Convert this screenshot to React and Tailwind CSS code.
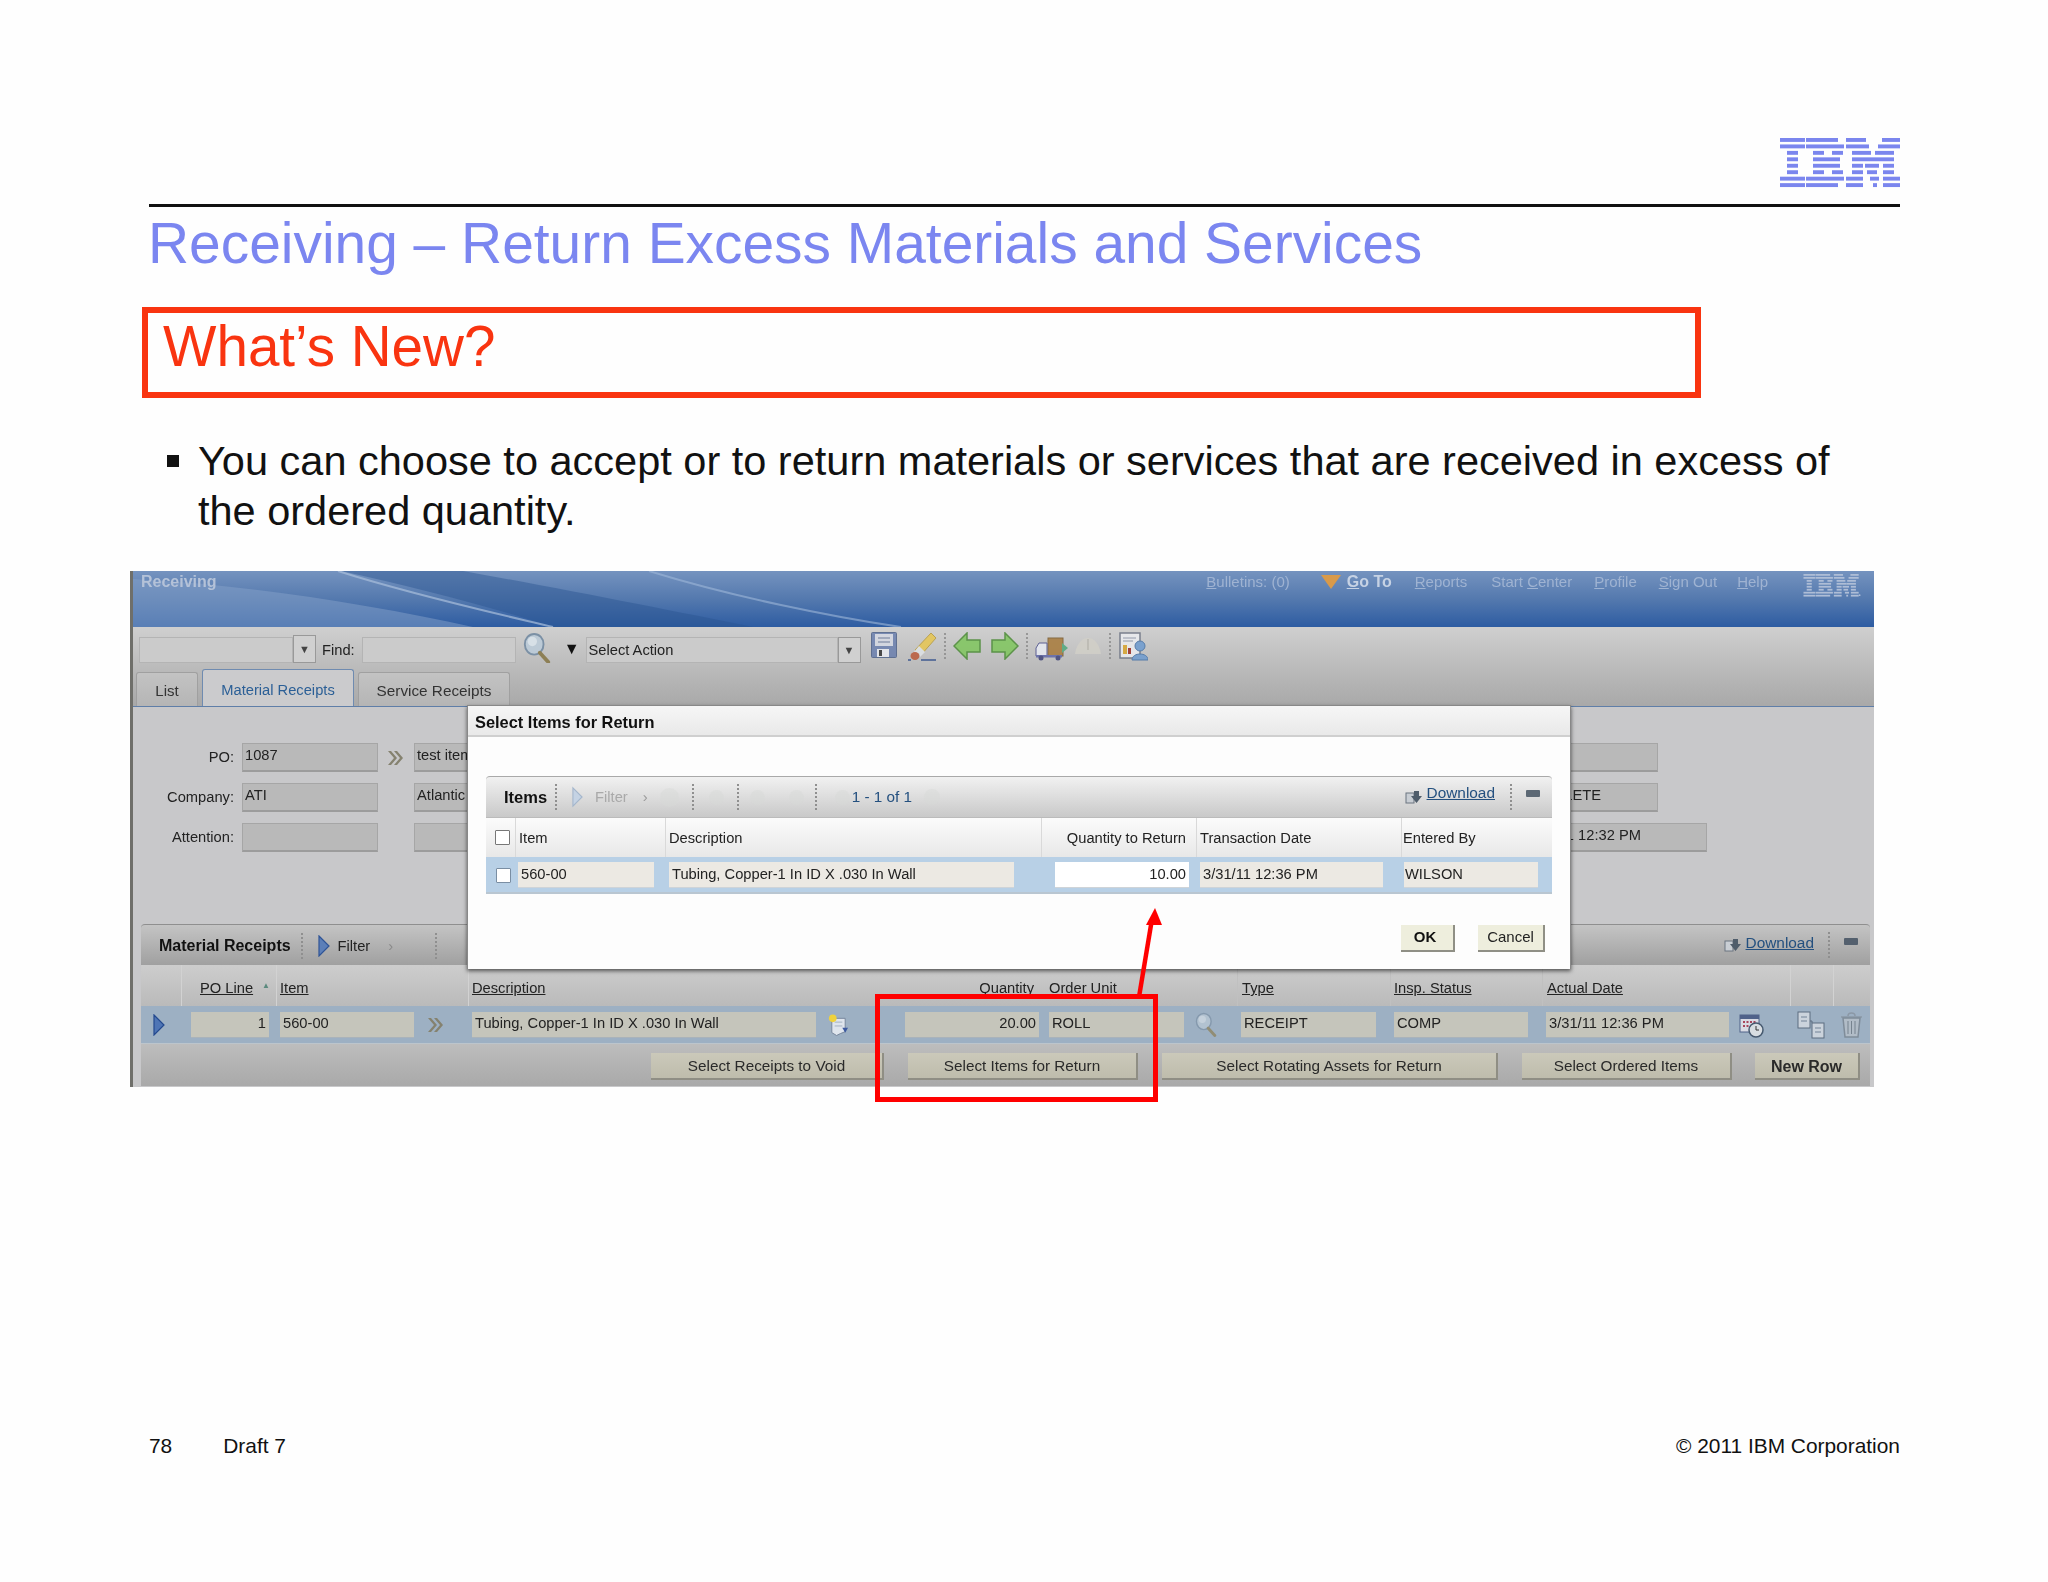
import React from "react";

const ibmRows = [
  [[0,25],[26,32],[66,20],[102,18]],
  [[0,25],[26,38],[66,23],[98,22]],
  [[7,11],[33,11],[52,11],[72,19],[95,19]],
  [[7,11],[33,27],[72,21],[93,21]],
  [[7,11],[33,27],[72,11],[85,14],[103,11]],
  [[7,11],[33,11],[52,11],[72,11],[87,10],[103,11]],
  [[0,25],[26,38],[66,17],[90,9],[103,17]],
  [[0,25],[26,32],[66,17],[93,4],[103,17]],
];
function IbmLogo({ color, className, dot }) {
  return (
    <svg viewBox="0 0 124 50" className={className}>
      {ibmRows.map((r, i) =>
        r.map(([x, w], j) => <rect key={i + "-" + j} x={x} y={i * 6.45} width={w} height={3.9} fill={color} />)
      )}
      {dot && <circle cx="122" cy="46" r="2" fill={color} />}
    </svg>
  );
}

const Magnifier = ({ className }) => (
  <svg viewBox="0 0 30 32" className={className}>
    <ellipse cx="12" cy="12" rx="10" ry="11" fill="#bccad6" stroke="#7b90a5" strokeWidth="2" />
    <ellipse cx="10" cy="9" rx="5" ry="5" fill="#d7e0e7" />
    <path d="M18 21 L27 31" stroke="#8d7f55" strokeWidth="4" strokeLinecap="round" />
  </svg>
);
const Floppy = () => (
  <svg viewBox="0 0 26 26" className="w-[26px] h-[26px]">
    <rect x="0.5" y="0.5" width="25" height="25" rx="1" fill="#6a7fae" stroke="#4e6188" />
    <rect x="4" y="2" width="18" height="12" fill="#d5d9e4" />
    <path d="M7 6 H19 M7 10 H19" stroke="#8792ac" strokeWidth="1.5" />
    <rect x="6" y="17" width="12" height="8" fill="#e9ebf0" />
    <rect x="8" y="18" width="3" height="6" fill="#333" />
  </svg>
);
const Eraser = () => (
  <svg viewBox="0 0 30 29" className="w-[30px] h-[29px]">
    <path d="M24 1 L29 6 L14 23 L8 18 Z" fill="#e7c651" stroke="#b59a3e" />
    <path d="M12 14 L18 20 L13 25 L7 20 Z" fill="#dfe3e6" />
    <ellipse cx="8" cy="24" rx="4.5" ry="4" fill="#bb5a3a" />
    <path d="M1 28 H4 M14 28 H29" stroke="#4f6696" strokeWidth="2" />
  </svg>
);
const ArrowL = () => (
  <svg viewBox="0 0 28 28" className="w-[28px] h-[28px]">
    <path d="M1 14 L14 1 V8 H27 V20 H14 V27 Z" fill="#7fc65d" stroke="#4a8a35" strokeWidth="1.5" />
  </svg>
);
const ArrowR = () => (
  <svg viewBox="0 0 28 28" className="w-[28px] h-[28px]">
    <path d="M27 14 L14 1 V8 H1 V20 H14 V27 Z" fill="#7fc65d" stroke="#4a8a35" strokeWidth="1.5" />
  </svg>
);
const Truck = () => (
  <svg viewBox="0 0 34 24" className="w-[34px] h-[24px]">
    <rect x="13" y="1" width="15" height="18" fill="#a87a3a" stroke="#7a5a2c" />
    <path d="M1 11 L4 6 H12 V19 H1 Z" fill="#e8ebf3" stroke="#4a4f8a" />
    <rect x="1" y="18" width="26" height="2.5" fill="#5f66a8" />
    <circle cx="6" cy="21" r="2.5" fill="#3d4278" />
    <circle cx="23" cy="21" r="2.5" fill="#3d4278" />
    <path d="M27 6 L33 11 L27 16 Z" fill="#4fa77c" />
  </svg>
);
const Dome = () => (
  <svg viewBox="0 0 28 18" className="w-[28px] h-[18px]">
    <path d="M1 17 C3 5 9 1 14 1 C19 1 25 5 27 17 Z" fill="#d2d0c8" />
    <path d="M14 2 V13" stroke="#a9a79e" />
  </svg>
);
const ReportIcon = () => (
  <svg viewBox="0 0 29 29" className="w-[29px] h-[29px]">
    <rect x="1" y="1" width="20" height="25" fill="#ecedf0" stroke="#6c7383" strokeWidth="1.5" />
    <path d="M4 6 H17 M4 9 H14" stroke="#8a92a5" />
    <rect x="4" y="13" width="4" height="9" fill="#d9a52e" />
    <rect x="9" y="16" width="3" height="6" fill="#9c2b22" />
    <circle cx="21" cy="14" r="5" fill="#6d9bd0" stroke="#4470a5" />
    <path d="M13 28 C13 20 29 20 29 28 Z" fill="#6d9bd0" stroke="#4470a5" />
  </svg>
);
const Dbl = ({ className }) => (
  <svg viewBox="0 0 17 16" className={className}>
    <path d="M1 1 L7 8 L1 15 H4 L10 8 L4 1 Z M7 1 L13 8 L7 15 H10 L16 8 L10 1 Z" fill="#85826f" />
  </svg>
);
const BlueTri = ({ className, fill = "#5c7fb8", stroke = "#2f5496" }) => (
  <svg viewBox="0 0 12 22" className={className}>
    <path d="M1 1 L11 11 L1 21 Z" fill={fill} stroke={stroke} strokeWidth="1.2" />
  </svg>
);
const NoteIcon = () => (
  <svg viewBox="0 0 22 26" className="w-[21px] h-[26px]">
    <path d="M4 6 H18 V20 L13 22 L9 24 L4 21 Z" fill="#dfe5ed" stroke="#74849a" />
    <path d="M7 10 H15 M7 14 H15" stroke="#a2afbf" />
    <circle cx="5" cy="6" r="4" fill="#efd23c" />
    <path d="M15 16 H21 L18 21 Z" fill="#3d5aa0" />
  </svg>
);
const Calendar = () => (
  <svg viewBox="0 0 25 26" className="w-[25px] h-[26px]">
    <rect x="1" y="3" width="19" height="17" fill="#d9dbe4" stroke="#50628a" />
    <rect x="1" y="3" width="19" height="4" fill="#50628a" />
    <path d="M4 10 H17 M4 14 H17" stroke="#a8465c" strokeWidth="2" strokeDasharray="2 1.5" />
    <circle cx="17" cy="18" r="7" fill="#d8dde2" stroke="#46596f" strokeWidth="1.5" />
    <path d="M17 14 V18 H20" stroke="#333" fill="none" />
  </svg>
);
const DupIcon = () => (
  <svg viewBox="0 0 28 28" className="w-[28px] h-[28px]">
    <rect x="1" y="1" width="12" height="16" fill="#cbd3dc" stroke="#5c6c80" />
    <rect x="15" y="12" width="12" height="15" fill="#cbd3dc" stroke="#5c6c80" />
    <path d="M4 6 H10 M4 10 H10 M18 17 H24 M18 21 H24" stroke="#738397" />
    <path d="M13 10 H15 V12" stroke="#5c6c80" fill="none" />
  </svg>
);
const Trash = () => (
  <svg viewBox="0 0 25 28" className="w-[25px] h-[28px]">
    <path d="M2 6 H23 M9 5 C9 1 16 1 16 5" stroke="#8b98a6" strokeWidth="1.5" fill="none" />
    <path d="M4 7 L6 26 H19 L21 7 Z" fill="#b1bcc7" stroke="#7f8c99" strokeWidth="1.5" />
    <path d="M9 10 V23 M12.5 10 V23 M16 10 V23" stroke="#76838f" />
  </svg>
);
const DownloadIcon = () => (
  <svg viewBox="0 0 17 14" className="w-[17px] h-[14px]">
    <rect x="1" y="3" width="8" height="10" fill="#c9ced4" stroke="#6b7580" />
    <path d="M9 1 H14 V6 H17 L11.5 13 L6 6 H9 Z" fill="#4f5d6b" />
  </svg>
);
const Ghost = ({ className }) => (
  <span className={"inline-block rounded-full bg-[#d6dad6] opacity-45 " + (className || "")} />
);

const Dots = ({ className }) => (
  <span className={"inline-block w-0 h-[26px] border-l-2 border-dotted border-[#8f8f8f] " + (className || "")} />
);

const Field = ({ className, children }) => (
  <div className={"h-[29px] bg-[#b9b9b9] border border-[#a6a6a6] border-b-2 border-b-[#9c9c9c] pl-[2px] leading-[22px] text-[14.7px] text-[#222] whitespace-nowrap overflow-hidden " + className}>
    {children}
  </div>
);
const RowField = ({ className, children }) => (
  <div className={"h-[26px] bg-[#c5c5bb] border-b border-[#aab3ba] px-[3px] leading-[22px] text-[14.7px] text-[#222] whitespace-nowrap overflow-hidden " + className}>
    {children}
  </div>
);
const DlgField = ({ className, children }) => (
  <div className={"h-[26px] bg-[#ece9e3] border-b border-[#cfd4d8] leading-[24px] text-[14.7px] text-[#222] whitespace-nowrap overflow-hidden " + className}>
    {children}
  </div>
);
const Btn = ({ className, children }) => (
  <div className={"h-[27px] pt-[2px] flex items-center justify-center bg-gradient-to-b from-[#cbc9ba] to-[#bebcac] border-b-2 border-r-2 border-[#8f8e84] text-[15.3px] text-[#2a2a2a] " + className}>
    {children}
  </div>
);
const Lbl = ({ children }) => (
  <div className="w-[101px] text-right text-[14.7px] text-[#222] leading-[29px]">{children}</div>
);
const NavLink = ({ className, children }) => (
  <span className={"text-[15px] text-[#9fb3d2] leading-[20px] whitespace-nowrap " + (className || "")}>{children}</span>
);

export default function App() {
  return (
    <div className="relative w-[2048px] h-[1582px] overflow-hidden bg-[#fefefe] font-['Liberation_Sans',Arial,sans-serif]">
      <div className="flex justify-end pt-[138px] pr-[144px]">
        <IbmLogo color="#7b86ee" className="w-[124px] h-[50px]" />
      </div>
      <div className="ml-[149px] mr-[148px] mt-[16px] h-[3px] bg-[#111]" />
      <h1 className="ml-[148px] mt-[3px] text-[56.9px] leading-[66px] text-[#7b86f0] whitespace-nowrap">
        Receiving – Return Excess Materials and Services
      </h1>
      <div className="ml-[142px] mt-[31px] w-[1559px] h-[91px] border-[6px] border-[#f93410] pl-[15px]">
        <div className="text-[56.6px] leading-[66px] mt-[1px] text-[#f93410]">What’s New?</div>
      </div>
      <div className="relative ml-[198px] mt-[38px] w-[1680px] text-[41.5px] leading-[50px] text-[#111]">
        <span className="absolute left-[-31px] top-[19px] w-[12px] h-[12px] bg-[#111]" />
        You can choose to accept or to return materials or services that are received in excess of
        <br />
        the ordered quantity.
      </div>

      {/* screenshot */}
      <div className="absolute left-[130px] top-[571px] w-[1744px] h-[516px] blur-[0.45px] border-l-[3px] border-[#6f6f6a] bg-[#c8c8ca]">
        <div className="relative h-[56px] overflow-hidden bg-gradient-to-b from-[#7593bf] via-[#5479ae] to-[#2d5ca2] flex justify-between">
          <svg viewBox="0 0 1741 56" className="absolute inset-0 w-full h-full" preserveAspectRatio="none">
            <path d="M0 8 C120 14 240 34 340 56 L0 56 Z" fill="#86a2ca" opacity="0.5" />
            <path d="M208 0 L330 0 C430 18 540 40 620 56 L420 56 C360 36 280 16 208 0 Z" fill="#2a5490" opacity="0.45" />
            <path d="M205 0 C280 24 370 44 420 56" stroke="#a9bfdc" strokeWidth="2" fill="none" opacity="0.7" />
            <path d="M516 0 C600 26 700 46 768 56" stroke="#9fb7d8" strokeWidth="2" fill="none" opacity="0.6" />
          </svg>
          <span className="relative pl-[8px] pt-[1px] text-[16px] font-bold leading-[20px] text-[#b4c2d8]">Receiving</span>
          <div className="relative flex items-start pt-[1px] pr-[11px]">
            <NavLink><u>B</u>ulletins: (0)</NavLink>
            <svg viewBox="0 0 20 14" className="ml-[31px] mt-[3px] w-[20px] h-[14px]">
              <path d="M0 0 H20 L10 14 Z" fill="#d99a4a" />
            </svg>
            <span className="ml-[6px] text-[16px] font-bold leading-[20px] text-[#c6d2e4]"><u>G</u>o To</span>
            <NavLink className="ml-[23px]"><u>R</u>eports</NavLink>
            <NavLink className="ml-[24px]">Start <u>C</u>enter</NavLink>
            <NavLink className="ml-[22px]"><u>P</u>rofile</NavLink>
            <NavLink className="ml-[22px]"><u>S</u>ign Out</NavLink>
            <NavLink className="ml-[20px]"><u>H</u>elp</NavLink>
            <IbmLogo color="#aebdd6" dot className="ml-[33px] mt-[2px] w-[62px] h-[23px]" />
          </div>
        </div>

        <div className="h-[80px] bg-gradient-to-b from-[#cfcfcf] to-[#a8a8a8] flex flex-col justify-between">
          <div className="flex items-start pl-[6px] pt-[5px]">
            <div className="mt-[5px] w-[154px] h-[26px] bg-[#cbcbcb] border border-[#b4b4b4]" />
            <div className="mt-[3px] w-[23px] h-[28px] bg-[#d0d0d0] border border-[#999] flex items-center justify-center text-[11px] text-[#444]">▼</div>
            <span className="ml-[6px] mt-[8px] text-[14.7px] leading-[20px] text-[#222]">Find:</span>
            <div className="ml-[7px] mt-[5px] w-[154px] h-[26px] bg-[#cbcbcb] border border-[#b4b4b4]" />
            <Magnifier className="ml-[6px] mt-[1px] w-[30px] h-[30px]" />
            <span className="ml-[12px] mt-[8px] text-[16px] leading-[18px] text-[#111]">▼</span>
            <div className="ml-[6px] mt-[5px] w-[252px] h-[26px] bg-[#cbcbcb] border border-[#b4b4b4] pl-[2px] text-[14.7px] leading-[24px] text-[#222]">Select Action</div>
            <div className="mt-[5px] w-[23px] h-[26px] bg-[#d0d0d0] border border-[#999] flex items-center justify-center text-[11px] text-[#444]">▼</div>
            <div className="ml-[10px] flex items-start opacity-85">
              <Floppy />
              <div className="ml-[10px]"><Eraser /></div>
              <Dots className="ml-[7px] mt-[1px]" />
              <div className="ml-[7px]"><ArrowL /></div>
              <div className="ml-[10px]"><ArrowR /></div>
              <Dots className="ml-[7px] mt-[1px]" />
              <div className="ml-[7px] mt-[5px]"><Truck /></div>
              <div className="ml-[5px] mt-[5px]"><Dome /></div>
              <Dots className="ml-[7px] mt-[1px]" />
              <div className="ml-[8px]"><ReportIcon /></div>
            </div>
          </div>
          <div className="flex items-end pl-[3px] border-b border-[#5f7ea8]">
            <div className="w-[62px] h-[34px] pt-[3px] rounded-t-[3px] bg-gradient-to-b from-[#c3c3c3] to-[#b5b5b5] border border-b-0 border-[#a0a0a0] flex items-center justify-center text-[15px] text-[#333]">List</div>
            <div className="ml-[4px] w-[152px] h-[37px] pt-[5px] rounded-t-[3px] bg-[#cbcbcd] border border-b-0 border-[#6f8bb0] flex items-center justify-center text-[14.7px] text-[#2b5f96]">Material Receipts</div>
            <div className="ml-[4px] w-[152px] h-[34px] pt-[3px] rounded-t-[3px] bg-gradient-to-b from-[#c3c3c3] to-[#b5b5b5] border border-b-0 border-[#a0a0a0] flex items-center justify-center text-[15.3px] text-[#333]">Service Receipts</div>
          </div>
        </div>

        <div className="h-[217px] pt-[36px] flex flex-col gap-[11px]">
          <div className="flex justify-between pr-[216px]">
            <div className="flex items-center">
              <Lbl>PO:</Lbl>
              <Field className="ml-[8px] w-[136px]">1087</Field>
              <Dbl className="ml-[9px] w-[17px] h-[16px]" />
              <Field className="ml-[10px] w-[150px]">test item</Field>
            </div>
            <Field className="w-[200px]" />
          </div>
          <div className="flex justify-between pr-[216px]">
            <div className="flex items-center">
              <Lbl>Company:</Lbl>
              <Field className="ml-[8px] w-[136px]">ATI</Field>
              <Field className="ml-[36px] w-[150px]">Atlantic</Field>
            </div>
            <Field className="w-[200px] text-right pr-[56px]">COMPLETE</Field>
          </div>
          <div className="flex justify-between pr-[167px]">
            <div className="flex items-center">
              <Lbl>Attention:</Lbl>
              <Field className="ml-[8px] w-[136px]" />
              <Field className="ml-[36px] w-[150px]" />
            </div>
            <Field className="w-[300px] text-right pr-[65px]">3/31/11 12:32 PM</Field>
          </div>
        </div>

        <div className="ml-[8px] mr-[4px] w-[1729px]">
          <div className="h-[41px] rounded-t-[4px] border-t border-[#8f8f8f] bg-gradient-to-b from-[#c4c4c4] to-[#a0a0a0] flex items-center justify-between">
            <div className="flex items-center pt-[2px]">
              <span className="ml-[18px] text-[16px] font-bold text-[#111]">Material Receipts</span>
              <Dots className="ml-[10px]" />
              <BlueTri className="ml-[15px] w-[12px] h-[22px]" />
              <span className="ml-[8px] text-[14.7px] text-[#222]">Filter</span>
              <span className="ml-[18px] text-[15px] text-[#8a8a8a]">›</span>
              <Dots className="ml-[42px]" />
            </div>
            <div className="flex items-center pr-[12px]">
              <DownloadIcon />
              <span className="ml-[5px] -mt-[5px] text-[15.4px] text-[#24507f] underline">Download</span>
              <Dots className="ml-[14px]" />
              <span className="ml-[14px] -mt-[7px] w-[14px] h-[7px] bg-[#54606e] rounded-[1px]" />
            </div>
          </div>
          <div className="h-[41px] flex bg-gradient-to-b from-[#cdcdcd] to-[#bababa] text-[14.7px] text-[#222]">
            <div className="w-[40px]" />
            <div className="w-[95px] pl-[18px] pt-[12px] border-l border-[#d2d2d2] flex"><u>PO Line</u><span className="ml-[9px] text-[8px] mt-[3px] text-[#5b8a7e]">▲</span></div>
            <div className="w-[192px] pl-[3px] pt-[12px] border-l border-[#d2d2d2]"><u>Item</u></div>
            <div className="w-[424px] pl-[3px] pt-[12px] border-l border-[#d2d2d2]"><u>Description</u></div>
            <div className="w-[152px] pr-[10px] pt-[12px] text-right">Quantity</div>
            <div className="w-[193px] pl-[5px] pt-[12px]">Order Unit</div>
            <div className="w-[153px] pl-[4px] pt-[12px] border-l border-[#c0c0c0]"><u>Type</u></div>
            <div className="w-[152px] pl-[3px] pt-[12px] border-l border-[#c0c0c0]"><u>Insp. Status</u></div>
            <div className="w-[248px] pl-[4px] pt-[12px] border-l border-[#c0c0c0]"><u>Actual Date</u></div>
            <div className="w-[43px] border-l border-[#d2d2d2]" />
            <div className="w-[37px] border-l border-[#d2d2d2]" />
          </div>
          <div className="h-[38px] flex items-center bg-[#9db0c3] border-b border-[#bcc5cc]">
            <BlueTri className="ml-[12px] w-[12px] h-[22px]" fill="#4f75b5" stroke="#24498f" />
            <RowField className="ml-[26px] w-[78px] text-right">1</RowField>
            <RowField className="ml-[11px] w-[134px]">560-00</RowField>
            <Dbl className="ml-[13px] w-[17px] h-[16px]" />
            <RowField className="ml-[28px] w-[344px]">Tubing, Copper-1 In ID X .030 In Wall</RowField>
            <div className="ml-[12px]"><NoteIcon /></div>
            <RowField className="ml-[56px] w-[134px] text-right">20.00</RowField>
            <RowField className="ml-[10px] w-[135px]">ROLL</RowField>
            <Magnifier className="ml-[11px] w-[22px] h-[25px] opacity-70" />
            <RowField className="ml-[24px] w-[135px]">RECEIPT</RowField>
            <RowField className="ml-[18px] w-[134px]">COMP</RowField>
            <RowField className="ml-[18px] w-[183px]">3/31/11 12:36 PM</RowField>
            <div className="ml-[10px]"><Calendar /></div>
            <div className="ml-[33px]"><DupIcon /></div>
            <div className="ml-[14px]"><Trash /></div>
          </div>
          <div className="h-[42px] pt-[9px] flex bg-gradient-to-b from-[#bdbdbd] to-[#a9a9a9]">
            <Btn className="ml-[510px] w-[233px]">Select Receipts to Void</Btn>
            <Btn className="ml-[24px] w-[230px]">Select Items for Return</Btn>
            <Btn className="ml-[24px] w-[336px]">Select Rotating Assets for Return</Btn>
            <Btn className="ml-[24px] w-[210px]">Select Ordered Items</Btn>
            <Btn className="ml-[23px] w-[105px] font-bold text-[16px]">New Row</Btn>
          </div>
        </div>

        {/* dialog */}
        <div className="absolute left-[334px] top-[134px] w-[1104px] h-[264px] bg-[#fdfdfd] border-t border-l border-r border-[#888] shadow-[0_2px_4px_rgba(0,0,0,0.6)]">
          <div className="h-[31px] bg-gradient-to-b from-[#f6f6f6] to-[#e9e9e9] border-b-2 border-[#cfcfcf] pl-[7px] leading-[33px] text-[16.4px] font-bold text-[#111]">
            Select Items for Return
          </div>
          <div className="mx-[18px] mt-[39px] w-[1066px] border-b-2 border-[#b9c6d1]">
            <div className="h-[41px] rounded-t-[4px] border-t border-[#a9a9a9] bg-gradient-to-b from-[#f1f1f1] to-[#c9c9c9] flex items-center justify-between">
              <div className="flex items-center">
                <span className="ml-[18px] text-[16.5px] font-bold text-[#111]">Items</span>
                <Dots className="ml-[8px]" />
                <BlueTri className="ml-[15px] w-[11px] h-[22px]" fill="#c5d3e4" stroke="#a4b6cc" />
                <span className="ml-[12px] text-[14.7px] text-[#a9a9a9]">Filter</span>
                <span className="ml-[15px] text-[15px] text-[#9c9c9c]">›</span>
                <Ghost className="ml-[12px] w-[19px] h-[19px]" />
                <Dots className="ml-[13px]" />
                <Ghost className="ml-[15px] w-[15px] h-[15px]" />
                <Dots className="ml-[13px]" />
                <Ghost className="ml-[11px] w-[15px] h-[15px]" />
                <Ghost className="ml-[24px] w-[15px] h-[15px]" />
                <Dots className="ml-[11px]" />
                <Ghost className="ml-[18px] w-[15px] h-[15px]" />
                <span className="ml-[2px] text-[15.3px] text-[#24507f] whitespace-nowrap">1 - 1 of 1</span>
                <Ghost className="ml-[12px] w-[16px] h-[16px]" />
              </div>
              <div className="flex items-center pr-[12px]">
                <DownloadIcon />
                <span className="ml-[5px] -mt-[9px] text-[15.4px] text-[#24507f] underline">Download</span>
                <Dots className="ml-[15px]" />
                <span className="ml-[14px] -mt-[8px] w-[14px] h-[7px] bg-[#5d6975] rounded-[1px]" />
              </div>
            </div>
            <div className="h-[40px] flex bg-gradient-to-b from-[#fbfbfb] to-[#e8e8e8] text-[14.7px] text-[#222] leading-[40px] border-t border-[#bbb]">
              <div className="w-[29px] flex items-center justify-center pl-[4px]"><span className="w-[15px] h-[15px] bg-white border border-[#777] rounded-[1px]" /></div>
              <div className="w-[150px] pl-[3px] border-l border-[#d9d9d9]">Item</div>
              <div className="w-[376px] pl-[3px] border-l border-[#d9d9d9]">Description</div>
              <div className="w-[155px] pr-[10px] text-right border-l border-[#d9d9d9]">Quantity to Return</div>
              <div className="w-[205px] pl-[3px] border-l border-[#d9d9d9]">Transaction Date</div>
              <div className="w-[151px] pl-[1px] border-l border-[#d9d9d9]">Entered By</div>
            </div>
            <div className="h-[35px] pt-[1px] flex items-center bg-[#b8d0e6]">
              <span className="ml-[10px] w-[15px] h-[15px] bg-white border border-[#7a8ea3] rounded-[1px]" />
              <DlgField className="ml-[7px] w-[136px] px-[3px]">560-00</DlgField>
              <DlgField className="ml-[15px] w-[345px] px-[3px]">Tubing, Copper-1 In ID X .030 In Wall</DlgField>
              <DlgField className="ml-[41px] w-[134px] px-[3px] text-right bg-white">10.00</DlgField>
              <DlgField className="ml-[11px] w-[183px] px-[3px]">3/31/11 12:36 PM</DlgField>
              <DlgField className="ml-[21px] w-[134px] px-[1px]">WILSON</DlgField>
            </div>
          </div>
          <div className="mt-[31px] pr-[25px] flex justify-end">
            <div className="w-[54px] h-[27px] pr-[4px] bg-[#eeeedd] border-r-2 border-b-2 border-[#8f8f85] flex items-center justify-center text-[15px] font-bold text-[#111]">OK</div>
            <div className="ml-[23px] w-[67px] h-[27px] bg-[#eeeedd] border-r-2 border-b-2 border-[#8f8f85] flex items-center justify-center text-[15px] text-[#222]">Cancel</div>
          </div>
        </div>
      </div>

      {/* annotations */}
      <div className="absolute left-[875px] top-[994px] w-[283px] h-[108px] border-[5px] border-[#ff0000]" />
      <svg viewBox="0 0 40 100" className="absolute left-[1130px] top-[905px] w-[40px] h-[100px]">
        <path d="M9 92 L22 14" stroke="#ff0000" strokeWidth="4.5" fill="none" />
        <path d="M25 3 L32 20 L16 20 Z" fill="#ff0000" />
      </svg>

      <div className="absolute left-[149px] right-[148px] top-[1433px] flex text-[20.9px] leading-[26px] text-[#111]">
        <span>78</span>
        <span className="ml-[51px]">Draft 7</span>
        <span className="ml-auto">© 2011 IBM Corporation</span>
      </div>
    </div>
  );
}
